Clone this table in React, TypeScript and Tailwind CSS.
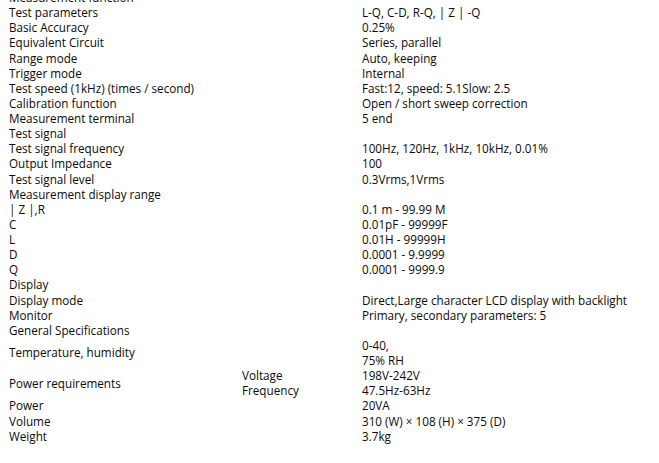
import React from "react";

type Row = { label: string; value?: string[] };

const rows: Row[] = [
  { label: "Measurement function" },
  { label: "Test parameters", value: ["L-Q, C-D, R-Q, | Z | -Q"] },
  { label: "Basic Accuracy", value: ["0.25%"] },
  { label: "Equivalent Circuit", value: ["Series, parallel"] },
  { label: "Range mode", value: ["Auto, keeping"] },
  { label: "Trigger mode", value: ["Internal"] },
  { label: "Test speed (1kHz) (times / second)", value: ["Fast:12, speed: 5.1Slow: 2.5"] },
  { label: "Calibration function", value: ["Open / short sweep correction"] },
  { label: "Measurement terminal", value: ["5 end"] },
  { label: "Test signal" },
  { label: "Test signal frequency", value: ["100Hz, 120Hz, 1kHz, 10kHz, 0.01%"] },
  { label: "Output Impedance", value: ["100"] },
  { label: "Test signal level", value: ["0.3Vrms,1Vrms"] },
  { label: "Measurement display range" },
  { label: "| Z |,R", value: ["0.1 m - 99.99 M"] },
  { label: "C", value: ["0.01pF - 99999F"] },
  { label: "L", value: ["0.01H - 99999H"] },
  { label: "D", value: ["0.0001 - 9.9999"] },
  { label: "Q", value: ["0.0001 - 9999.9"] },
  { label: "Display" },
  { label: "Display mode", value: ["Direct,Large character LCD display with backlight"] },
  { label: "Monitor", value: ["Primary, secondary parameters: 5"] },
  { label: "General Specifications" },
  { label: "Temperature, humidity", value: ["0-40,", "75% RH"] },
];

const tail: Row[] = [
  { label: "Power", value: ["20VA"] },
  { label: "Volume", value: ["310 (W) × 108 (H) × 375 (D)"] },
  { label: "Weight", value: ["3.7kg"] },
];

const td = "p-0 align-middle leading-[15.12px]";

export default function App() {
  return (
    <div className="h-[463px] overflow-hidden bg-white text-[11.7px] text-[#0a0a0a] [font-family:'Open_Sans',sans-serif]">
      <table className="ml-[9px] mt-[-10px] border-collapse">
        <colgroup>
          <col className="w-[233px]" />
          <col className="w-[120px]" />
          <col />
        </colgroup>
        <tbody>
          {rows.map((r) => (
            <tr key={r.label}>
              <td colSpan={2} className={td}>
                {r.label}
              </td>
              <td className={td}>
                {r.value?.map((v, i) => (
                  <div key={i}>{v}</div>
                ))}
              </td>
            </tr>
          ))}
          <tr>
            <td rowSpan={2} className={td}>
              Power requirements
            </td>
            <td className={td}>Voltage</td>
            <td className={td}>198V-242V</td>
          </tr>
          <tr>
            <td className={td}>Frequency</td>
            <td className={td}>47.5Hz-63Hz</td>
          </tr>
          {tail.map((r) => (
            <tr key={r.label}>
              <td colSpan={2} className={td}>
                {r.label}
              </td>
              <td className={td}>{r.value?.[0]}</td>
            </tr>
          ))}
        </tbody>
      </table>
    </div>
  );
}
